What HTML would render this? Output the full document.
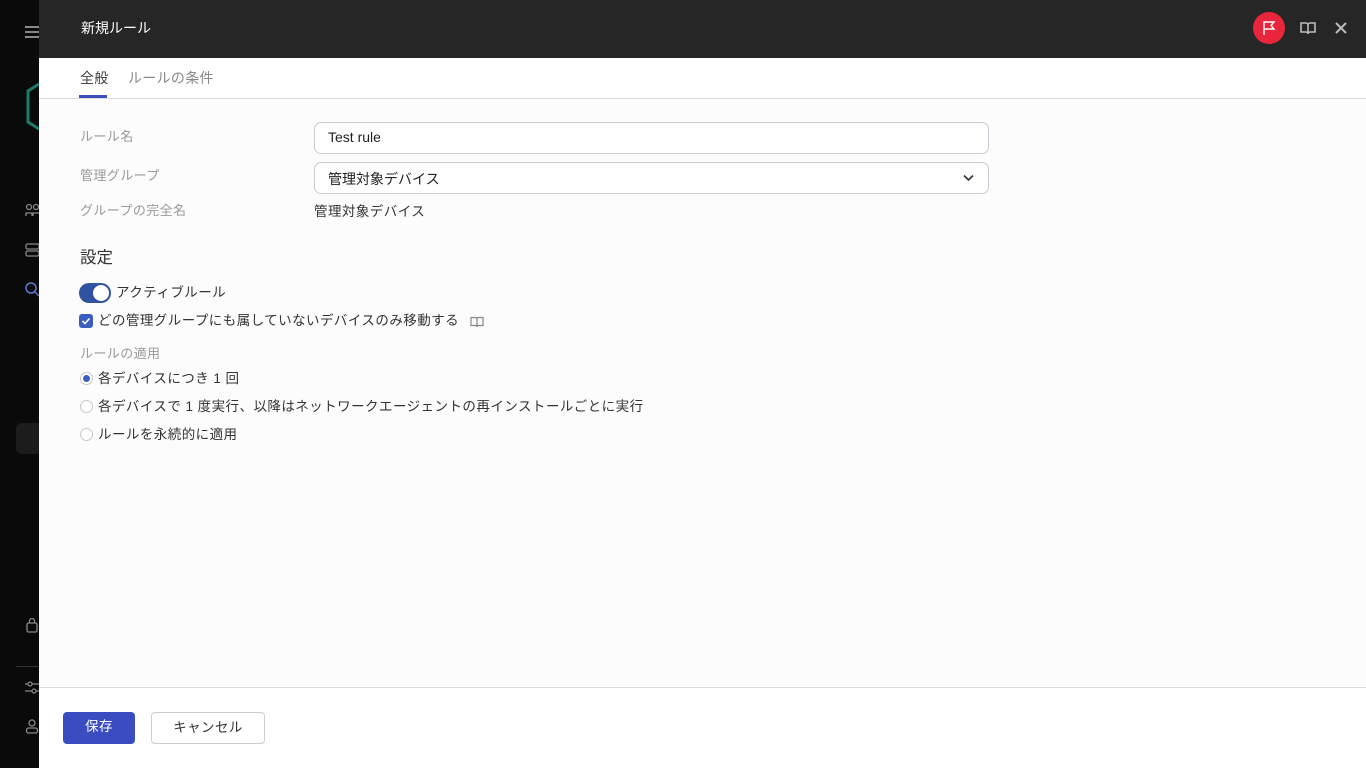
<!DOCTYPE html>
<html><head><meta charset="utf-8"><style>
*{box-sizing:border-box;margin:0;padding:0}
body{width:1366px;height:768px;overflow:hidden;font-family:"Liberation Sans","Noto Sans CJK JP",sans-serif;background:#0a0a0a;position:relative;color:#222}
.side{position:absolute;left:0;top:0;width:39px;height:768px;background:#0a0a0a}
.panel{position:absolute;left:39px;top:0;width:1327px;height:768px;background:#fcfcfc}
.hdr{position:absolute;left:0;top:0;width:100%;height:58px;background:#262626;color:#fff;font-size:14px}
.hdr .t{position:absolute;left:42px;top:18px}
.tabs{position:absolute;left:0;top:58px;width:100%;height:41px;background:#fff;border-bottom:1px solid #ddd;font-size:14px}
.tab{position:absolute;top:10px;color:#888;letter-spacing:0.3px}
.lbl{position:absolute;left:41px;font-size:13px;color:#999;letter-spacing:0.4px}
.inp{position:absolute;left:275px;width:675px;height:32px;border:1px solid #c9c9d3;border-radius:7px;background:#fff;font-size:14px;padding:6px 13px;color:#222}
.txt{position:absolute;font-size:13.5px;color:#333;letter-spacing:0.45px}
.radio{position:absolute;left:41px;width:13px;height:13px;border:1px solid #c8c8c8;border-radius:50%;background:#fff}
.foot{position:absolute;left:0;top:687px;width:100%;height:81px;background:#fff;border-top:1px solid #ddd}
.btn{position:absolute;top:24px;height:32px;border-radius:4px;font-size:13.5px;text-align:center;line-height:30px;letter-spacing:0.4px}
</style></head><body>
<div class="side">
 <div style="position:absolute;left:25px;top:26px;width:14px;height:2px;background:#888;box-shadow:0 5px 0 #888,0 10px 0 #888"></div>
 <svg style="position:absolute;left:26px;top:82px" width="13" height="50"><path d="M13 2 L2 9 L2 40 L13 47" fill="none" stroke="#1b7c68" stroke-width="3"/></svg>
 <svg style="position:absolute;left:25px;top:203px" width="14" height="14" fill="none" stroke="#888" stroke-width="1.3"><circle cx="4" cy="4" r="2.5"/><circle cx="11" cy="4" r="2.5"/><path d="M1 13v-3h6v3M8 13v-3h6"/></svg>
 <svg style="position:absolute;left:25px;top:243px" width="14" height="14" fill="none" stroke="#888" stroke-width="1.3"><rect x="1" y="1" width="13" height="5" rx="1.5"/><rect x="1" y="8" width="13" height="5" rx="1.5"/></svg>
 <svg style="position:absolute;left:25px;top:282px" width="14" height="16" fill="none" stroke="#5a7bd0" stroke-width="1.5"><circle cx="6" cy="6" r="5"/><path d="M10 10l4 4"/></svg>
 <div style="position:absolute;left:16px;top:423px;width:23px;height:31px;background:#1c1c1c;border-radius:6px 0 0 6px"></div>
 <svg style="position:absolute;left:25px;top:618px" width="14" height="16" fill="none" stroke="#888" stroke-width="1.3"><rect x="2" y="5" width="10" height="9" rx="1.5"/><path d="M4.5 5V3a2.5 2.5 0 0 1 5 0v2"/></svg>
 <div style="position:absolute;left:16px;top:666px;width:23px;height:1px;background:#333"></div>
 <svg style="position:absolute;left:25px;top:680px" width="14" height="16" fill="none" stroke="#888" stroke-width="1.2"><path d="M0 4h14M0 11h14"/><circle cx="5" cy="4" r="2" fill="#0a0a0a"/><circle cx="9" cy="11" r="2" fill="#0a0a0a"/></svg>
 <svg style="position:absolute;left:25px;top:719px" width="14" height="16" fill="none" stroke="#888" stroke-width="1.3"><circle cx="7" cy="4" r="3"/><rect x="1.5" y="9" width="11" height="5" rx="2"/></svg>
</div>
<div class="panel">
 <div class="hdr"><span class="t">新規ルール</span>
  <div style="position:absolute;left:1214px;top:12px;width:32px;height:32px;border-radius:50%;background:#e8253b"></div>
  <svg style="position:absolute;left:1223px;top:20px" width="14" height="16" fill="none" stroke="#fff" stroke-width="1.4"><path d="M2 15V2h10l-3 3.5 3 3.5H2"/></svg>
  <svg style="position:absolute;left:1261px;top:21px" width="16" height="14" fill="none" stroke="#bbb" stroke-width="1.6"><path d="M1 2h5a2 2 0 0 1 2 2v9a2 2 0 0 0-2-2H1zM15 2h-5a2 2 0 0 0-2 2v9a2 2 0 0 1 2-2h5z"/></svg>
  <svg style="position:absolute;left:1296px;top:22px" width="12" height="12" stroke="#bbb" stroke-width="2"><path d="M1 1l10 10M11 1L1 11"/></svg>
 </div>
 <div class="tabs">
  <span class="tab" style="left:41px;color:#444">全般</span>
  <div style="position:absolute;left:40px;top:37px;width:28px;height:3px;background:#3c4fbd"></div>
  <span class="tab" style="left:89px">ルールの条件</span>
 </div>
 <span class="lbl" style="top:126px">ルール名</span>
 <div class="inp" style="top:122px">Test rule</div>
 <span class="lbl" style="top:165px">管理グループ</span>
 <div class="inp" style="top:162px">管理対象デバイス
  <svg style="position:absolute;right:14px;top:11px" width="11" height="8" fill="none" stroke="#333" stroke-width="1.6"><path d="M1 1.5l4.5 4.5 4.5-4.5"/></svg></div>
 <span class="lbl" style="top:200px">グループの完全名</span>
 <span class="txt" style="left:275px;top:200px">管理対象デバイス</span>
 <span style="position:absolute;left:41px;top:244px;font-size:16.5px;color:#333">設定</span>
 <div style="position:absolute;left:40px;top:283px;width:32px;height:20px;border-radius:10px;background:#2f53a0"></div>
 <div style="position:absolute;left:54px;top:285px;width:16px;height:16px;border-radius:50%;background:#fff"></div>
 <span class="txt" style="left:77px;top:281px">アクティブルール</span>
 <div style="position:absolute;left:40px;top:314px;width:14px;height:14px;border-radius:3px;background:#3a5fc0"></div>
 <svg style="position:absolute;left:42px;top:316px" width="10" height="10" fill="none" stroke="#fff" stroke-width="1.6"><path d="M1.5 5l2.5 2.5 4.5-5"/></svg>
 <span class="txt" style="left:59px;top:309px">どの管理グループにも属していないデバイスのみ移動する</span>
 <svg style="position:absolute;left:431px;top:316px" width="14" height="12" fill="none" stroke="#888" stroke-width="1.2"><path d="M1 1.5h4.5a1.5 1.5 0 0 1 1.5 1.5v8a1.5 1.5 0 0 0-1.5-1.5H1zM13 1.5H8.5A1.5 1.5 0 0 0 7 3v8a1.5 1.5 0 0 1 1.5-1.5H13z"/></svg>
 <span class="lbl" style="top:343px">ルールの適用</span>
 <div class="radio" style="top:372px"><div style="position:absolute;left:2px;top:2px;width:7px;height:7px;border-radius:50%;background:#3a5fc0"></div></div>
 <span class="txt" style="left:59px;top:367px">各デバイスにつき 1 回</span>
 <div class="radio" style="top:400px"></div>
 <span class="txt" style="left:59px;top:395px">各デバイスで 1 度実行、以降はネットワークエージェントの再インストールごとに実行</span>
 <div class="radio" style="top:428px"></div>
 <span class="txt" style="left:59px;top:423px">ルールを永続的に適用</span>
 <div class="foot">
  <div class="btn" style="left:24px;width:72px;background:#3a4cbf;color:#fff">保存</div>
  <div class="btn" style="left:112px;width:114px;border:1px solid #ccc;color:#333;background:#fff">キャンセル</div>
 </div>
</div>
</body></html>
